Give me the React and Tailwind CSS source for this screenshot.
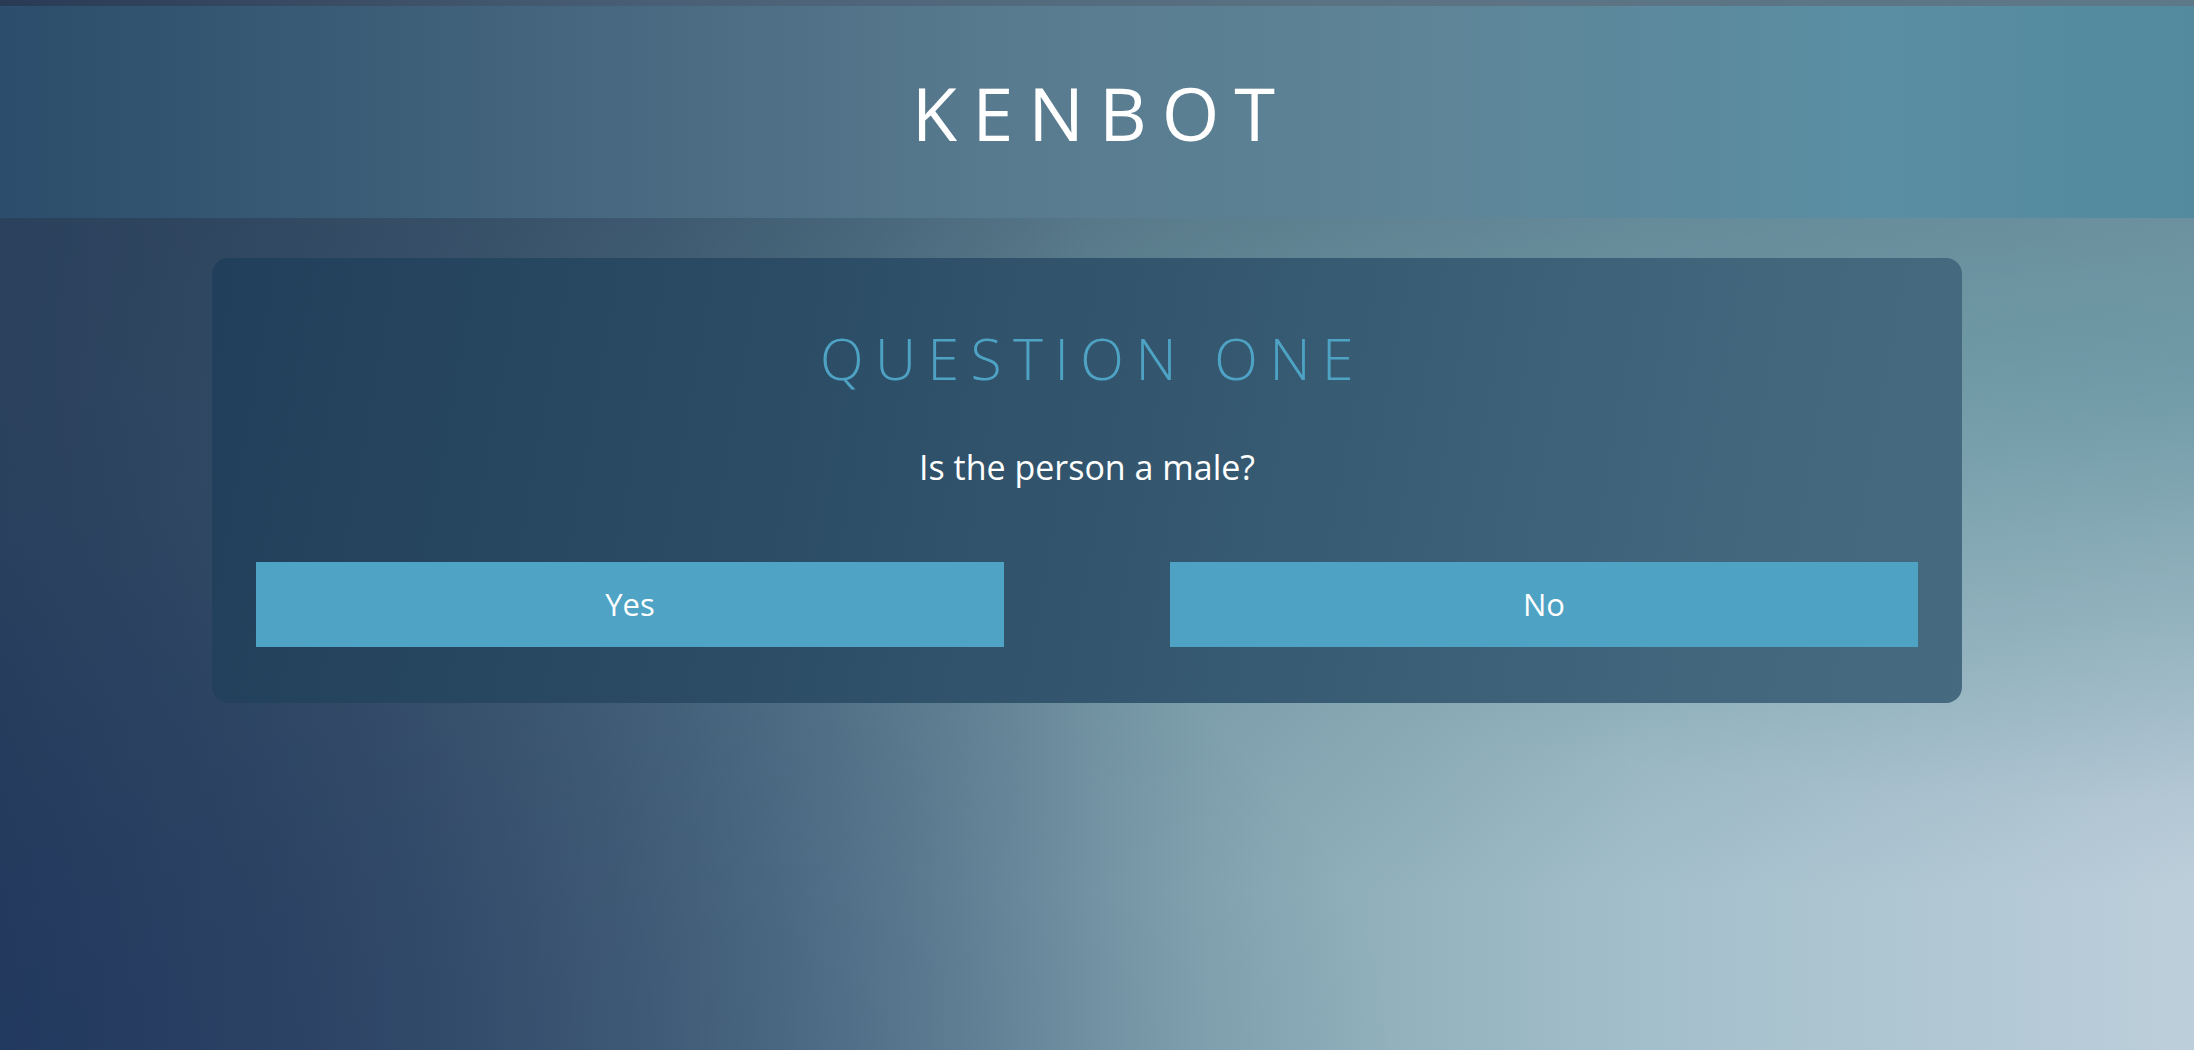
import React from "react";

export default function App() {
  return (
    <div
      className="relative w-full h-[1050px] overflow-hidden"
      style={{ fontFamily: '"Open Sans", "Noto Sans", sans-serif' }}
    >
      {/* background layers */}
      <div className="absolute inset-0 bg-[linear-gradient(90deg,#27405f_0%,#3d566f_15%,#5d7e91_35%,#86a7b3_55%,#a3bfcb_75%,#bccfdb_100%)]" />
      <div className="absolute inset-0 bg-[linear-gradient(180deg,rgba(50,80,100,0.5)_20%,rgba(60,100,115,0.25)_50%,rgba(0,0,0,0)_85%)]" />
      <div className="absolute inset-0 bg-[linear-gradient(90deg,rgba(40,55,85,0.45)_0%,rgba(40,55,85,0.2)_30%,rgba(0,0,0,0)_50%)]" />
      <div className="absolute inset-0 bg-[radial-gradient(ellipse_at_100%_35%,rgba(80,145,155,0.45),rgba(0,0,0,0)_45%)]" />
      <div className="absolute inset-0 bg-[radial-gradient(ellipse_at_0%_100%,rgba(30,55,100,0.5),rgba(0,0,0,0)_45%)]" />

      <div className="relative flex flex-col">
        {/* top strip */}
        <div className="h-[6px] bg-[linear-gradient(90deg,#293a54_0%,#4a5f75_30%,#5b7283_60%,#5d7887_100%)]" />
        {/* header */}
        <header className="h-[212px] flex items-center justify-center bg-[linear-gradient(90deg,#2c4d6b_0%,#3f6079_20%,#587a8e_45%,#5e8497_65%,#5a8ea3_85%,#538a9e_100%)]">
          <h1 className="text-[74px] font-normal leading-none text-white tracking-[15px] pl-[8px] pt-[2px]">
            KENBOT
          </h1>
        </header>

        {/* card */}
        <div className="mt-[40px] ml-[212px] w-[1750px] h-[445px] rounded-[16px] bg-[linear-gradient(100deg,#213f5a_0%,#2b4b65_30%,#365a71_60%,#42667c_85%,#466b80_100%)] flex flex-col items-center px-[44px]">
          <h2 className="mt-[72px] text-[57px] font-light leading-none text-[#4ea3c5] tracking-[11.5px] pl-[11px]">
            QUESTION ONE
          </h2>
          <p className="mt-[63px] text-[34px] font-normal leading-none text-white">
            Is the person a male?
          </p>
          <div className="mt-[78px] w-full flex justify-between">
            <button className="w-[748px] h-[85px] bg-[#4fa3c4] text-white text-[31px] font-normal flex items-center justify-center">
              Yes
            </button>
            <button className="w-[748px] h-[85px] bg-[#4ea2c3] text-white text-[31px] font-normal flex items-center justify-center">
              No
            </button>
          </div>
        </div>
      </div>
    </div>
  );
}
